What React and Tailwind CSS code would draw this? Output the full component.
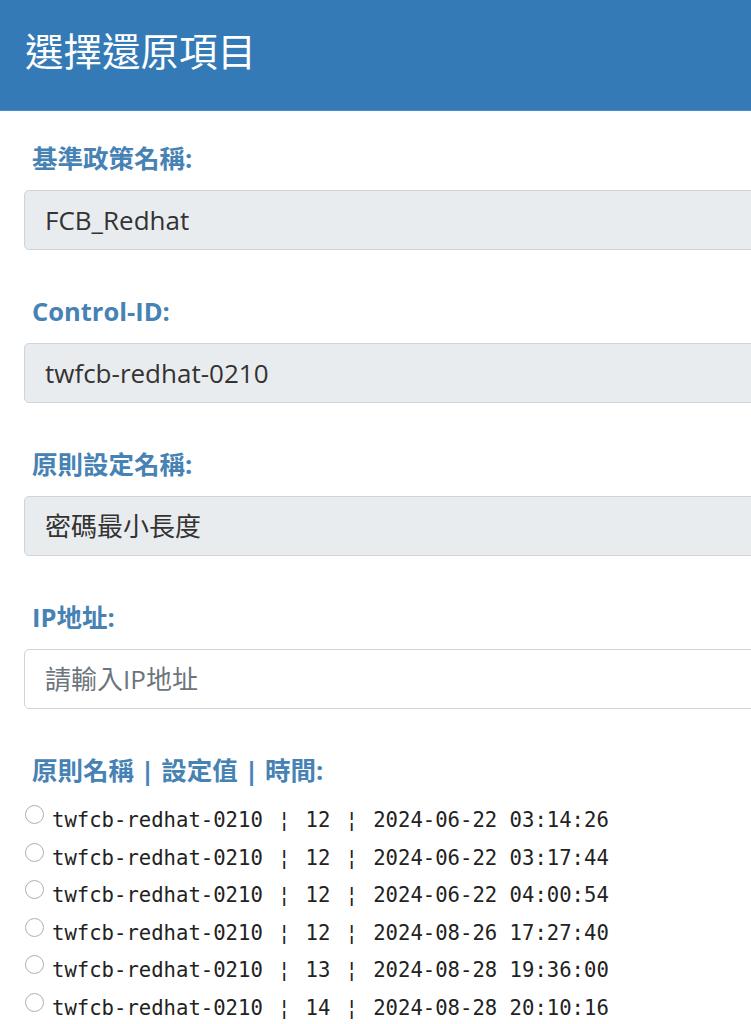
const fields = [
  { label: "基準政策名稱:", value: "FCB_Redhat" },
  { label: "Control-ID:", value: "twfcb-redhat-0210" },
  { label: "原則設定名稱:", value: "密碼最小長度" },
];

const records = [
  { id: "twfcb-redhat-0210", value: "12", time: "2024-06-22 03:14:26" },
  { id: "twfcb-redhat-0210", value: "12", time: "2024-06-22 03:17:44" },
  { id: "twfcb-redhat-0210", value: "12", time: "2024-06-22 04:00:54" },
  { id: "twfcb-redhat-0210", value: "12", time: "2024-08-26 17:27:40" },
  { id: "twfcb-redhat-0210", value: "13", time: "2024-08-28 19:36:00" },
  { id: "twfcb-redhat-0210", value: "14", time: "2024-08-28 20:10:16" },
];

const sans = "font-['Open_Sans','Noto_Sans_CJK_TC',sans-serif]";

function Label({ children }) {
  return (
    <div className="pl-2 text-[25.5px] font-bold leading-[36px] text-[#4682b4]">
      {children}
    </div>
  );
}

// the broken bar falls back to a wider proportional glyph in the original
function Sep() {
  return <span className="inline-block w-[18px] text-center">¦</span>;
}

export default function App() {
  return (
    <div className={`min-h-screen overflow-hidden bg-white ${sans}`}>
      {/* Header */}
      <header className="flex h-[111px] items-center border-b border-[#4a8ccb] bg-[#337ab7] pl-[25px]">
        <h1 className="pb-[6px] text-[38.5px] font-normal text-white">選擇還原項目</h1>
      </header>

      <main className="w-[800px] pl-6 pt-[29px]">
        {fields.map((f) => (
          <div key={f.label} className="mb-[43px]">
            <Label>{f.label}</Label>
            <div className="mt-[14px] flex h-[60px] items-center rounded-[5px] border border-[#ced4da] bg-[#e9ecef] pl-[20px] text-[26px] text-[#333]">
              {f.value}
            </div>
          </div>
        ))}

        <div className="mb-[43px]">
          <Label>IP地址:</Label>
          <input
            type="text"
            placeholder="請輸入IP地址"
            className="mt-[14px] h-[60px] w-full rounded-[5px] border border-[#ced4da] bg-white pl-[20px] text-[26px] text-[#333] outline-none placeholder:text-[#6c757d]"
          />
        </div>

        <Label>原則名稱 | 設定值 | 時間:</Label>
        <ul className="mt-[13px]">
          {records.map((r) => (
            <li key={r.time} className="flex h-[37.5px] items-start">
              <span className="mt-[4px] ml-[1px] mr-[8px] inline-block h-[19px] w-[19px] shrink-0 rounded-full border-[1.5px] border-[#b0b0b0] bg-white" />
              <span className="whitespace-pre pt-[4px] font-['DejaVu_Sans_Mono',monospace] text-[20.6px] leading-[30px] text-[#222]">
                {r.id} <Sep /> {r.value} <Sep /> {r.time}
              </span>
            </li>
          ))}
        </ul>
      </main>
    </div>
  );
}
